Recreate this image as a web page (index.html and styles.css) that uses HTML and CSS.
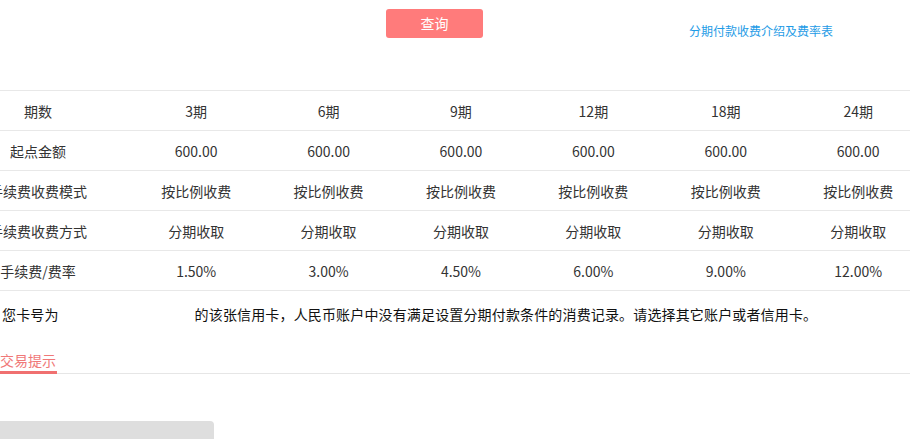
FILE: index.html
```html
<!DOCTYPE html>
<html lang="zh-CN">
<head>
<meta charset="utf-8">
<title>分期付款</title>
<link rel="stylesheet" href="styles.css">
</head>
<body>
<div class="page">
  <div class="top">
    <button class="query">查询</button>
    <a class="intro" href="#">分期付款收费介绍及费率表</a>
  </div>
  <div class="table">
    <div class="row">
      <div class="cell">期数</div><div class="cell">3期</div><div class="cell">6期</div><div class="cell">9期</div><div class="cell">12期</div><div class="cell">18期</div><div class="cell">24期</div>
    </div>
    <div class="row">
      <div class="cell">起点金额</div><div class="cell">600.00</div><div class="cell">600.00</div><div class="cell">600.00</div><div class="cell">600.00</div><div class="cell">600.00</div><div class="cell">600.00</div>
    </div>
    <div class="row">
      <div class="cell">手续费收费模式</div><div class="cell">按比例收费</div><div class="cell">按比例收费</div><div class="cell">按比例收费</div><div class="cell">按比例收费</div><div class="cell">按比例收费</div><div class="cell">按比例收费</div>
    </div>
    <div class="row">
      <div class="cell">手续费收费方式</div><div class="cell">分期收取</div><div class="cell">分期收取</div><div class="cell">分期收取</div><div class="cell">分期收取</div><div class="cell">分期收取</div><div class="cell">分期收取</div>
    </div>
    <div class="row">
      <div class="cell">手续费/费率</div><div class="cell">1.50%</div><div class="cell">3.00%</div><div class="cell">4.50%</div><div class="cell">6.00%</div><div class="cell">9.00%</div><div class="cell">12.00%</div>
    </div>
  </div>
  <p class="msg">您卡号为<span class="mask"></span>的该张信用卡，人民币账户中没有满足设置分期付款条件的消费记录。请选择其它账户或者信用卡。</p>
  <div class="tabs"><span class="tab">交易提示</span></div>
  <div class="graybox"></div>
</div>
</body>
</html>
```

FILE: styles.css
```css
html, body {
  margin: 0;
  padding: 0;
  background: #fff;
  overflow: hidden;
}
body {
  font-family: "Noto Sans CJK SC", "Microsoft YaHei", sans-serif;
  font-size: 14px;
  color: #333;
}
.page {
  width: 910px;
  height: 439px;
  overflow: hidden;
}
.top {
  height: 90px;
  display: flex;
  align-items: flex-start;
}
.query {
  margin: 9px 0 0 386px;
  width: 97px;
  height: 29px;
  border: none;
  border-radius: 3px;
  background: #ff7b7b;
  color: #fff;
  font-family: inherit;
  font-size: 14px;
  line-height: 29px;
  padding: 0;
}
.intro {
  margin: 22px 0 0 206px;
  font-size: 12px;
  line-height: 18px;
  color: #1e9be6;
  text-decoration: none;
  white-space: nowrap;
}
.table {
  margin-left: -54px;
  width: 1000px;
  border-top: 1px solid #e8e8e8;
}
.row {
  display: grid;
  grid-template-columns: 184px repeat(6, 132.4px);
  height: 39px;
  border-bottom: 1px solid #e8e8e8;
}
.cell {
  display: flex;
  align-items: center;
  justify-content: center;
  white-space: nowrap;
  color: #333;
}
.msg {
  margin: 0;
  padding: 12px 0 0 2px;
  height: 34px;
  line-height: 22px;
  color: #111;
  white-space: nowrap;
  letter-spacing: 0.15px;
}
.mask {
  display: inline-block;
  width: 136px;
}
.tabs {
  margin-top: 13px;
  border-bottom: 1px solid #e6e6e6;
  height: 23px;
}
.tab {
  display: inline-block;
  width: 57px;
  height: 20px;
  line-height: 18px;
  color: #f07878;
  border-bottom: 3px solid #f07070;
  white-space: nowrap;
}
.graybox {
  margin-top: 47px;
  width: 214px;
  height: 30px;
  background: #dedede;
  border-radius: 0 4px 0 0;
}
```
